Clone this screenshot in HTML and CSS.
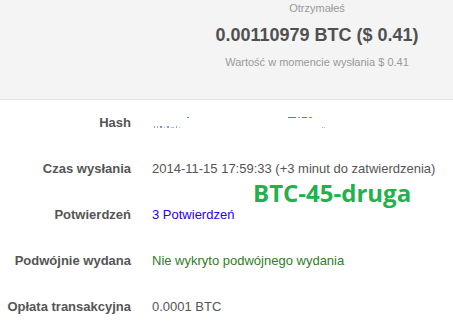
FILE: index.html
```html
<!DOCTYPE html>
<html lang="pl">
<head>
<meta charset="utf-8">
<title>Transakcja</title>
<link rel="stylesheet" href="styles.css">
</head>
<body>
<div class="page">
  <section class="summary">
    <div class="summary-box">
      <div class="summary-title">Otrzymałeś</div>
      <div class="summary-amount">0.00110979 BTC ($ 0.41)</div>
      <div class="summary-note">Wartość w momencie wysłania $ 0.41</div>
    </div>
  </section>
  <section class="details">
    <div class="row">
      <div class="label">Hash</div>
      <div class="value">
        <svg class="hash-frag" width="180" height="16" viewBox="0 0 180 16">
          <g fill="#6f9be0">
            <rect x="2" y="11" width="1" height="2"/>
            <rect x="5" y="11" width="1" height="2" fill="#8aa4e4"/>
            <rect x="8" y="11" width="2" height="2"/>
            <rect x="12" y="12" width="1" height="1" fill="#9fb4e8"/>
            <rect x="15" y="11" width="2" height="2" fill="#7f9fe2"/>
            <rect x="19" y="12" width="3" height="1" fill="#a9bde9"/>
            <rect x="24" y="11" width="1" height="2" fill="#86a6e4"/>
            <rect x="27" y="12" width="1" height="1" fill="#b3c4ea"/>
            <rect x="35" y="2" width="2" height="1" fill="#2b8de0"/>
            <rect x="136" y="2" width="8" height="1" fill="#2b8de0"/>
            <rect x="146" y="2" width="2" height="1" fill="#7ab4ea"/>
            <rect x="150" y="2" width="5" height="1" fill="#2b8de0"/>
            <rect x="157" y="2" width="3" height="1" fill="#5aa2e6"/>
            <rect x="170" y="12" width="1" height="1" fill="#8ab0e4"/>
            <rect x="172" y="12" width="1" height="1" fill="#a9c2ea"/>
          </g>
        </svg>
      </div>
    </div>
    <div class="row">
      <div class="label">Czas wysłania</div>
      <div class="value">2014-11-15 17:59:33 (+3 minut do zatwierdzenia)</div>
    </div>
    <div class="row">
      <div class="label">Potwierdzeń</div>
      <div class="value value-link">3 Potwierdzeń</div>
    </div>
    <div class="row">
      <div class="label">Podwójnie wydana</div>
      <div class="value value-ok">Nie wykryto podwójnego wydania</div>
    </div>
    <div class="row">
      <div class="label">Opłata transakcyjna</div>
      <div class="value">0.0001 BTC</div>
    </div>
    <div class="stamp">BTC-45-druga</div>
  </section>
</div>
</body>
</html>
```

FILE: styles.css
```css
html, body {
  margin: 0;
  padding: 0;
  background: #ffffff;
}

body {
  font-family: "Liberation Sans", Arial, sans-serif;
  color: #555555;
  width: 453px;
  height: 331px;
  overflow: hidden;
}

.summary {
  background: #f4f4f4;
  height: 99px;
  border-bottom: 1px solid #e4e4e4;
  display: flex;
  justify-content: flex-end;
}

.summary-box {
  width: 272px;
  text-align: center;
  padding-top: 1px;
}

.summary-title {
  font-size: 11px;
  line-height: 15px;
  color: #999999;
}

.summary-amount {
  margin-top: 7px;
  font-size: 18px;
  line-height: 24px;
  font-weight: bold;
  color: #505050;
}

.summary-note {
  margin-top: 8px;
  font-size: 11px;
  line-height: 15px;
  color: #999999;
}

.details {
  position: relative;
}

.row {
  display: grid;
  grid-template-columns: 131px 1fr;
  column-gap: 21px;
  padding: 15px 0;
  font-size: 13px;
  line-height: 16px;
  white-space: nowrap;
}

.label {
  text-align: right;
  font-weight: bold;
  color: #555555;
}

.value {
  color: #555555;
}

.hash-frag {
  display: block;
}

.value-link {
  color: #2a00f0;
}

.value-ok {
  color: #2e7d1e;
}

.stamp {
  position: absolute;
  left: 253px;
  top: 81px;
  font-family: "Open Sans", sans-serif;
  font-weight: bold;
  font-size: 24px;
  line-height: 24px;
  color: #22b14c;
}
```
